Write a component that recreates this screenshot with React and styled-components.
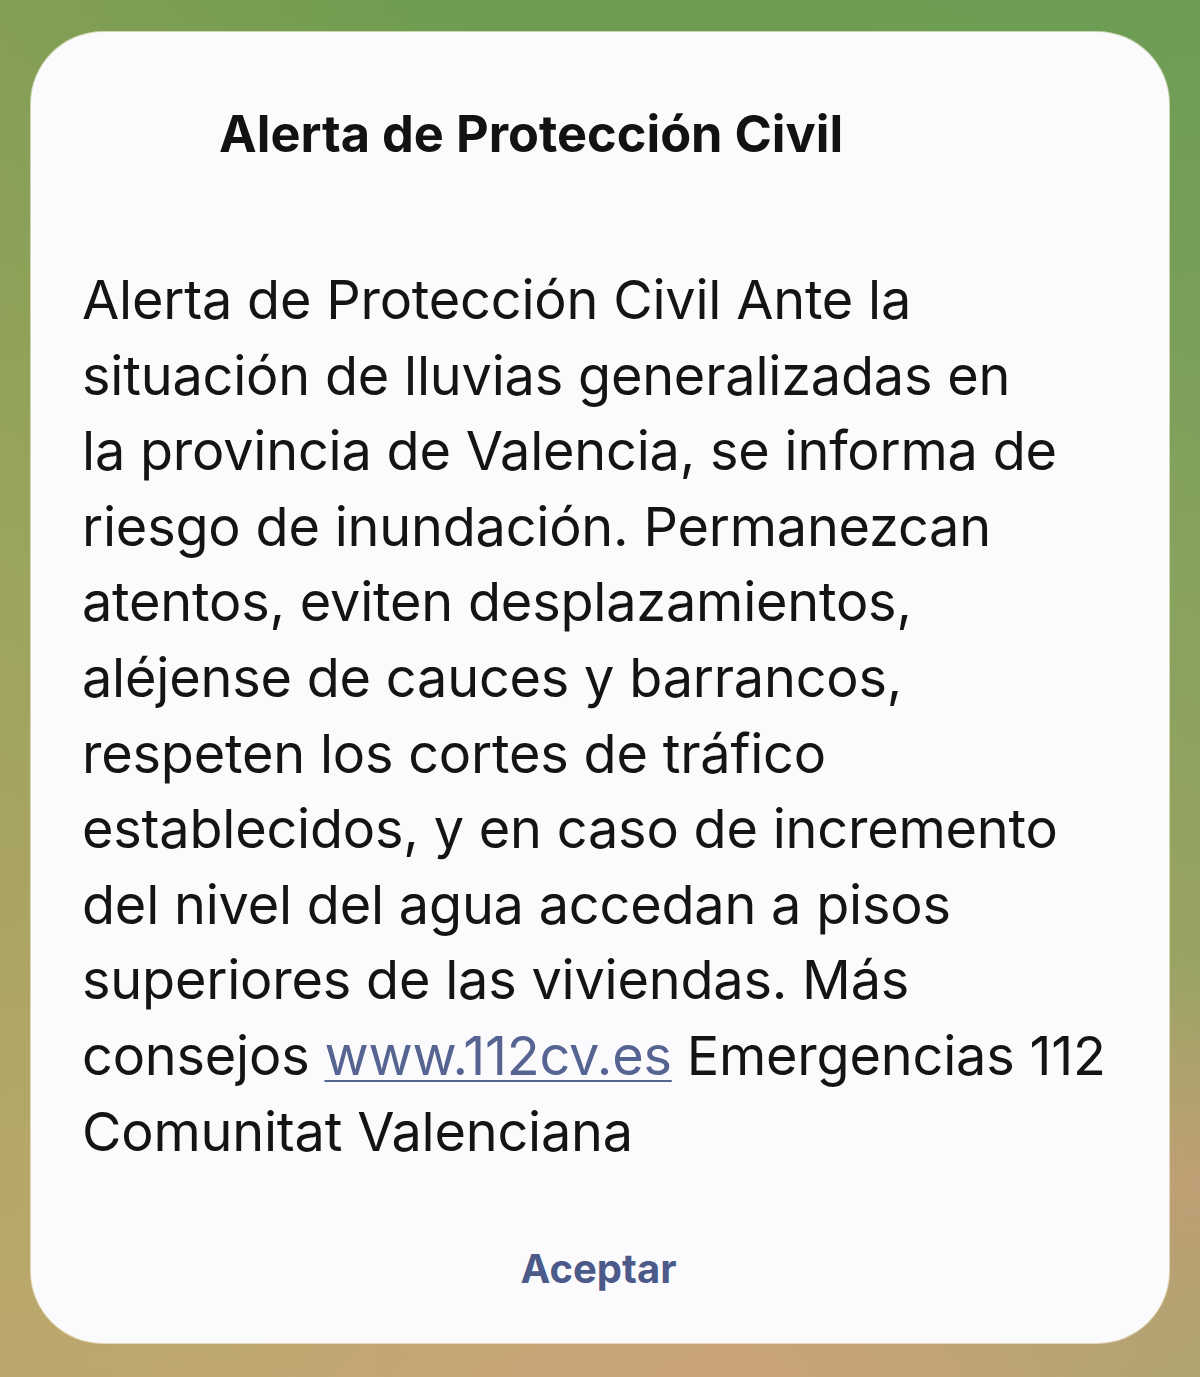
import React from "react";
import styled, { createGlobalStyle } from "styled-components";

const GlobalStyle = createGlobalStyle`
  html, body { margin: 0; padding: 0; }
  body {
    font-family: "Inter", "Noto Sans", sans-serif;
    -webkit-font-smoothing: antialiased;
  }
  #root { min-height: 100vh; }
`;

const Screen = styled.div`
  width: 1200px;
  height: 1377px;
  box-sizing: border-box;
  padding: 32px 31px 34px 31px;
  background:
    radial-gradient(ellipse 520px 260px at 62% 100%, rgba(206, 160, 124, 0.75), rgba(206, 160, 124, 0) 100%),
    radial-gradient(ellipse 260px 220px at 100% 86%, rgba(204, 156, 122, 0.7), rgba(204, 156, 122, 0) 100%),
    linear-gradient(90deg, rgba(176, 164, 96, 0.35) 0%, rgba(176, 164, 96, 0) 40%, rgba(110, 156, 100, 0) 60%, rgba(110, 156, 100, 0.3) 100%),
    linear-gradient(180deg, #6c9c50 0%, #7a9f55 18%, #92a55c 42%, #a8a562 66%, #b8aa6c 84%, #c2a874 100%);
  display: flex;
`;

const Dialog = styled.div`
  flex: 1;
  background: #fbfbfd;
  border-radius: 72px;
  box-shadow: 0 0 0 1px rgba(255, 252, 235, 0.6);
  display: flex;
  flex-direction: column;
  padding: 72px 40px 50px 51px;
  box-sizing: border-box;
`;

const Title = styled.h1`
  margin: 0 0 98px 0;
  padding-left: 137px;
  font-family: "Inter", sans-serif;
  font-weight: 700;
  font-size: 50.5px;
  line-height: 60px;
  color: #121212;
`;

const Message = styled.p`
  margin: 0;
  font-family: "Inter", sans-serif;
  font-weight: 400;
  font-size: 54px;
  line-height: 75.6px;
  letter-spacing: -0.2px;
  color: #141414;
  white-space: nowrap;
`;

const Line = styled.span`
  display: block;
`;

const Link = styled.a`
  color: #566492;
  text-decoration: underline;
  text-decoration-thickness: 2px;
  text-underline-offset: 5px;
`;

const Actions = styled.div`
  margin-top: auto;
  margin-left: -14px;
  display: flex;
  justify-content: center;
`;

const ActionButton = styled.button`
  border: none;
  background: transparent;
  padding: 0;
  font-family: "Inter", sans-serif;
  font-weight: 700;
  font-size: 40px;
  line-height: 48px;
  color: #4b5a89;
  cursor: pointer;
`;

const lines = [
  "Alerta de Protección Civil Ante la",
  "situación de lluvias generalizadas en",
  "la provincia de Valencia, se informa de",
  "riesgo de inundación. Permanezcan",
  "atentos, eviten desplazamientos,",
  "aléjense de cauces y barrancos,",
  "respeten los cortes de tráfico",
  "establecidos, y en caso de incremento",
  "del nivel del agua accedan a pisos",
  "superiores de las viviendas. Más",
];

export default function App() {
  return (
    <>
      <GlobalStyle />
      <Screen>
        <Dialog>
          <Title>Alerta de Protección Civil</Title>
          <Message>
            {lines.map((l) => (
              <Line key={l}>{l}</Line>
            ))}
            <Line>
              consejos <Link href="#">www.112cv.es</Link> Emergencias 112
            </Line>
            <Line>Comunitat Valenciana</Line>
          </Message>
          <Actions>
            <ActionButton>Aceptar</ActionButton>
          </Actions>
        </Dialog>
      </Screen>
    </>
  );
}
